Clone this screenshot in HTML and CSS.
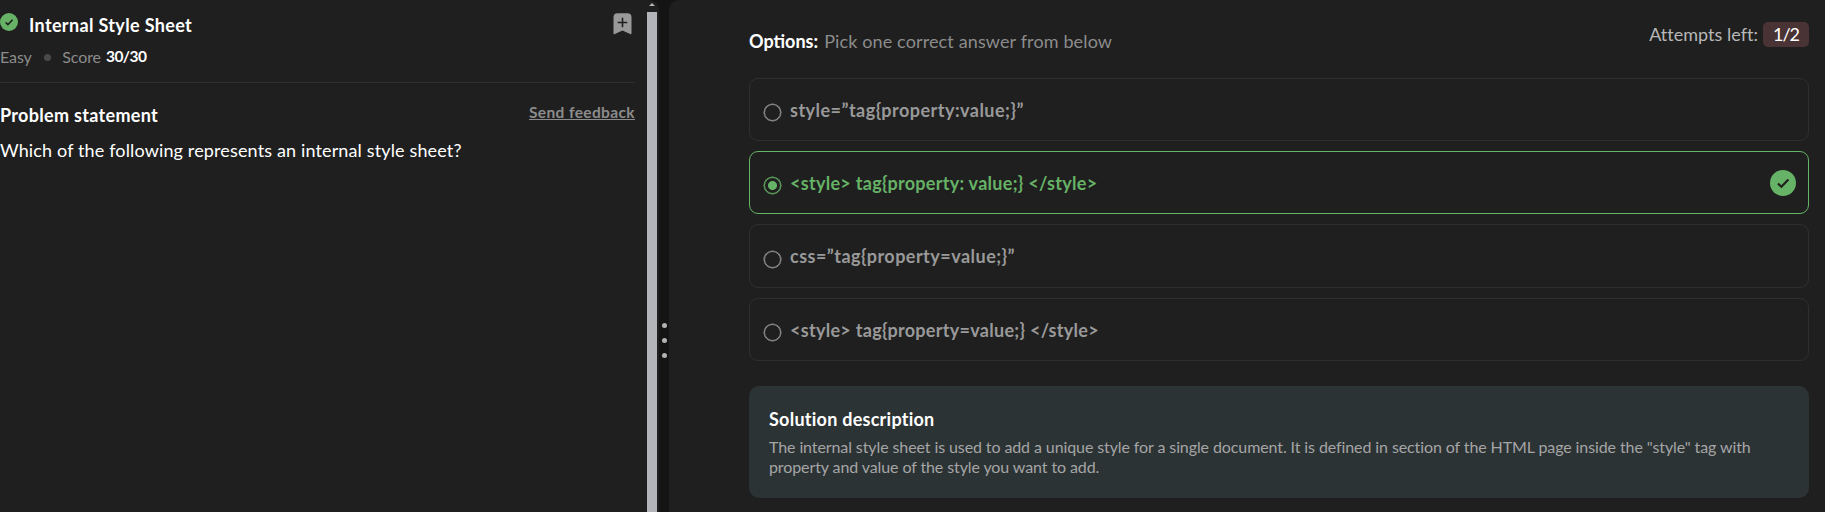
FILE: index.html
```html
<!DOCTYPE html>
<html lang="en">
<head>
<meta charset="utf-8">
<title>Internal Style Sheet</title>
<link rel="stylesheet" href="styles.css">
</head>
<body>
<main class="workspace">
  <section class="problem">
    <div class="problem-body">
      <header class="problem-head">
        <div class="title-row">
          <svg class="solved" viewBox="0 0 26 26"><circle cx="13" cy="13" r="13" fill="#66b266"/><path d="M8.2 13.6l3.2 3.1 6.8-7" fill="none" stroke="#1f1f1f" stroke-width="2.2"/></svg>
          <h1 class="title">Internal Style Sheet</h1>
          <svg class="bookmark" viewBox="0 0 19 22"><path d="M4.5 0.3h10A4 4 0 0 1 18.5 4.3V20.3q0 1.5-1.4.8L9.5 17.6 1.9 21.1q-1.4.7-1.4-.8V4.3A4 4 0 0 1 4.5.3z" fill="#999"/><path d="M9.5 4.7v9.6M4.7 9.5h9.6" stroke="#1f1f1f" stroke-width="1.6"/></svg>
        </div>
        <div class="meta"><span>Easy</span><i class="dot"></i><span>Score</span><b class="points">30/30</b></div>
      </header>
      <div class="statement-row"><h2 class="statement-title">Problem statement</h2><a class="feedback">Send feedback</a></div>
      <p class="question">Which of the following represents an internal style sheet?</p>
    </div>
    <div class="scrollbar"><i class="arrow"></i><i class="thumb"></i></div>
  </section>
  <div class="splitter"><i></i><i></i><i></i></div>
  <section class="answers">
    <header class="answers-head">
      <div class="prompt"><b>Options:</b><span class="hint">Pick one correct answer from below</span></div>
      <div class="attempts"><span class="left">Attempts left:</span><span class="badge">1/2</span></div>
    </header>
    <div class="options">
      <div class="option quoted"><i class="radio"></i><span>style=”tag{property:value;}”</span></div>
      <div class="option correct"><i class="radio"></i><span>&lt;style&gt; tag{property: value;} &lt;/style&gt;</span>
        <svg class="check" viewBox="0 0 26 26"><circle cx="13" cy="13" r="13" fill="#66b266"/><path d="M8 13.5l3.4 3.2 7-7.2" fill="none" stroke="#1f1f1f" stroke-width="2.2"/></svg></div>
      <div class="option quoted"><i class="radio"></i><span>css=”tag{property=value;}”</span></div>
      <div class="option"><i class="radio"></i><span>&lt;style&gt; tag{property=value;} &lt;/style&gt;</span></div>
    </div>
    <article class="solution">
      <h2 class="solution-title">Solution description</h2>
      <p class="solution-text">The internal style sheet is used to add a unique style for a single document. It is defined in section of the HTML page inside the "style" tag with<br>property and value of the style you want to add.</p>
    </article>
  </section>
</main>
</body>
</html>
```
FILE: styles.css
```css
* { box-sizing: border-box; }
body { margin: 0; background: #141414; color: #fff; font-family: Lato, "Noto Sans", sans-serif; overflow: hidden; }
h1, h2, p { margin: 0; }
.workspace { display: flex; height: 512px; }
.problem { display: flex; width: 659px; background: #1f1f1f; border-radius: 0 10px 0 0; }
.problem-body { width: 635px; }
.problem-head { height: 83px; border-bottom: 1px solid #2f2f2f; }
.title-row { display: flex; align-items: flex-start; padding-top: 13px; height: 44px; }
.solved { width: 18px; height: 18px; margin-right: 11px; }
.title { font-size: 18px; line-height: 24px; font-weight: 700; letter-spacing: 0.35px; }
.bookmark { width: 19px; height: 22px; margin: 0 3px 0 auto; }
.meta { display: flex; align-items: center; height: 24px; font-size: 16px; color: #8c8c8c; letter-spacing: -0.1px; }
.dot { width: 7px; height: 7px; border-radius: 50%; background: #4a4a4a; margin: 2px 11.5px 0 12px; }
.points { color: #fff; margin-left: 5px; font-size: 15.5px; letter-spacing: -0.5px; }
.statement-row { display: flex; justify-content: space-between; padding-top: 19px; height: 53px; }
.statement-title { font-size: 18px; line-height: 26px; letter-spacing: 0.31px; }
.feedback { font-size: 15.5px; line-height: 20px; font-weight: 700; color: #8c8c8c; text-decoration: underline; letter-spacing: 0.37px; }
.question { font-size: 18px; line-height: 28px; letter-spacing: 0.14px; }
.scrollbar { display: flex; flex-direction: column; align-items: center; width: 10px; margin-left: 12px; }
.arrow { border: 3px solid transparent; border-top: 0; border-bottom: 3px solid #b3b3ba; margin: 3px 0 6px; }
.thumb { flex: 1; width: 10px; background: #b3b3ba; }
.splitter { display: flex; flex-direction: column; align-items: center; justify-content: center; gap: 10px; width: 10px; padding: 169px 0 0 1px; }
.splitter i { width: 5px; height: 5px; border-radius: 50%; background: #b3b3b3; }
.answers { flex: 1; background: #1f1f1f; border-radius: 10px 0 0 0; padding: 22px 16px 0 80px; }
.answers-head { display: flex; justify-content: space-between; height: 56px; font-size: 18px; }
.prompt { padding-top: 6px; line-height: 26px; }
.hint { color: #8c8c8c; margin-left: 6px; letter-spacing: 0.13px; }
.attempts { display: flex; line-height: 25px; }
.left { color: #b8b8b8; margin-right: 5px; letter-spacing: 0.02px; }
.badge { width: 46px; height: 25px; border-radius: 5px; background: #4a3335; text-align: center; letter-spacing: -1px; }
.options { display: grid; gap: 10px; grid-template-rows: 63px 63px 64px 63px; }
.option { display: flex; align-items: center; border: 1px solid #2f2f2f; border-radius: 9px; padding: 0 12px 0 14px; font-size: 18px; font-weight: 700; color: #999; letter-spacing: 0.29px; }
.quoted { letter-spacing: 0.48px; }
.radio { width: 17px; height: 17px; border: 1px solid #999; box-shadow: 0 0 0 0.5px #999; border-radius: 50%; margin: 6px 9px 0 0; }
.correct { border-color: #66b266; color: #66b266; }
.correct .radio { border-color: #66b266; box-shadow: 0 0 0 0.5px #66b266; background: radial-gradient(circle, #66b266 4px, transparent 5px); }
.check { width: 26px; height: 26px; margin-left: auto; }
.solution { margin-top: 25px; height: 112px; border-radius: 10px; background: #2c3335; padding: 20px; }
.solution-title { font-size: 18px; line-height: 26px; letter-spacing: 0.25px; }
.solution-text { margin-top: 5px; font-size: 16px; line-height: 20px; color: #a5a5a5; white-space: nowrap; letter-spacing: -0.1px; }
```
